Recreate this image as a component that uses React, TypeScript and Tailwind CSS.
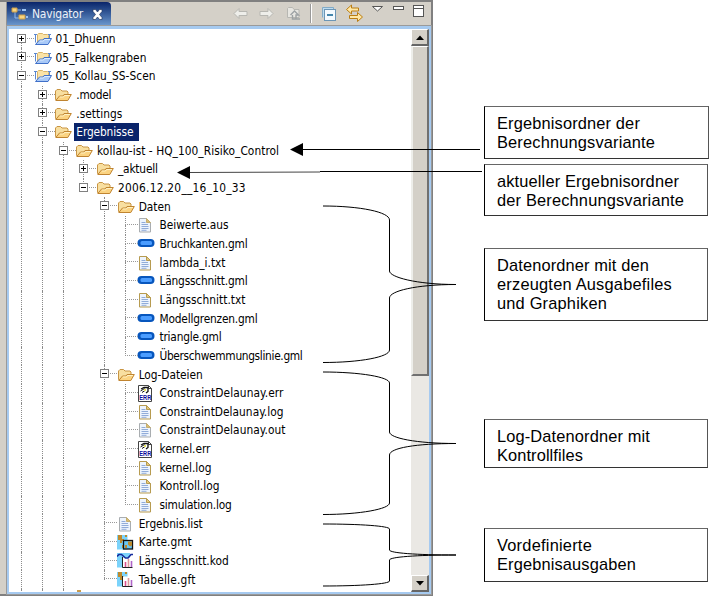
import { useLayoutEffect, useRef, useState } from "react";
import type { ReactNode } from "react";

type Kind = "project" | "folder" | "text" | "pill" | "err" | "map" | "kod" | "gft";
type Node = { level: number; kind: Kind; label: string; width: number; box?: "plus" | "minus"; selected?: boolean; pale?: boolean };

const nodes: Node[] = [
  { level: 0, kind: "project", label: "01_Dhuenn", width: 60, box: "plus" },
  { level: 0, kind: "project", label: "05_Falkengraben", width: 91, box: "plus" },
  { level: 0, kind: "project", label: "05_Kollau_SS-Scen", width: 100, box: "minus" },
  { level: 1, kind: "folder", label: ".model", width: 35, box: "plus" },
  { level: 1, kind: "folder", label: ".settings", width: 46, box: "plus" },
  { level: 1, kind: "folder", label: "Ergebnisse", width: 57, box: "minus", selected: true },
  { level: 2, kind: "folder", label: "kollau-ist - HQ_100_Risiko_Control", width: 182, box: "minus" },
  { level: 3, kind: "folder", label: "_aktuell", width: 40, box: "plus" },
  { level: 3, kind: "folder", label: "2006.12.20__16_10_33", width: 128, box: "minus" },
  { level: 4, kind: "folder", label: "Daten", width: 32, box: "minus" },
  { level: 5, kind: "text", label: "Beiwerte.aus", width: 69, pale: true },
  { level: 5, kind: "pill", label: "Bruchkanten.gml", width: 88 },
  { level: 5, kind: "text", label: "lambda_i.txt", width: 66 },
  { level: 5, kind: "pill", label: "Längsschnitt.gml", width: 88 },
  { level: 5, kind: "text", label: "Längsschnitt.txt", width: 86 },
  { level: 5, kind: "pill", label: "Modellgrenzen.gml", width: 98 },
  { level: 5, kind: "pill", label: "triangle.gml", width: 62 },
  { level: 5, kind: "pill", label: "Überschwemmungslinie.gml", width: 143 },
  { level: 4, kind: "folder", label: "Log-Dateien", width: 64, box: "minus" },
  { level: 5, kind: "err", label: "ConstraintDelaunay.err", width: 124 },
  { level: 5, kind: "text", label: "ConstraintDelaunay.log", width: 124 },
  { level: 5, kind: "text", label: "ConstraintDelaunay.out", width: 126, pale: true },
  { level: 5, kind: "err", label: "kernel.err", width: 51 },
  { level: 5, kind: "text", label: "kernel.log", width: 52 },
  { level: 5, kind: "text", label: "Kontroll.log", width: 60 },
  { level: 5, kind: "text", label: "simulation.log", width: 72 },
  { level: 4, kind: "text", label: "Ergebnis.list", width: 64, pale: true },
  { level: 4, kind: "map", label: "Karte.gmt", width: 53 },
  { level: 4, kind: "kod", label: "Längsschnitt.kod", width: 90 },
  { level: 4, kind: "gft", label: "Tabelle.gft", width: 57 },
];

// The tree goes on below the visible part on the three outer levels.
function continues(row: number, level: number) {
  for (let i = row + 1; i < nodes.length; i++) {
    if (nodes[i].level < level) return false;
    if (nodes[i].level === level) return true;
  }
  return level < 3;
}

// Spreads a line of text over the given width by its letter spacing.
function Fit({ text, width }: { text: string; width: number }) {
  const ref = useRef<HTMLSpanElement>(null);
  const [spacing, setSpacing] = useState(0);
  useLayoutEffect(() => {
    if (ref.current) setSpacing((width - ref.current.getBoundingClientRect().width) / text.length);
  }, [text, width]);
  return (
    <span ref={ref} className="inline-block whitespace-pre" style={{ letterSpacing: `${spacing}px` }}>
      {text}
    </span>
  );
}

function Folder({ project }: { project?: boolean }) {
  if (project) {
    return (
      <svg width="18" height="14" viewBox="0 0 18 14">
        <path d="M0 2.5h3M1.5 2.5v8M14 2.5h3M15.5 2.5v4" stroke="#5b87cf" fill="none" />
        <path d="M3.5 11V2.5L4.5 1.5h4l1 1h4l1 1V7L5 12z" fill="#fbe3a6" stroke="#d9b469" />
        <path d="M1.5 12.5L5.5 8h3.5l1-1.5h7.5L14 12.5z" fill="#a9c9f7" stroke="#3f70c9" strokeLinejoin="round" />
        <path d="M5.8 9h3.7l1-1.5h5.5" stroke="#deedff" fill="none" />
      </svg>
    );
  }
  return (
    <svg width="18" height="14" viewBox="0 0 18 14">
      <path d="M1.5 11.5V3L3 1.5h3.5L8 3h5l1 1v3L3 12z" fill="#f8dfa0" stroke="#c99543" />
      <path d="M1.8 12.5L5.5 8h3.5l1-1.5h7.3L13.8 12.5z" fill="#fbd381" stroke="#c08430" strokeLinejoin="round" />
      <path d="M5.8 9h3.7l1-1.5h5.5" stroke="#fff2c4" fill="none" />
    </svg>
  );
}

function Page({ pale }: { pale?: boolean }) {
  const c = pale ? "#a9adb0" : "#b79b50";
  return (
    <svg width="18" height="16" viewBox="0 0 18 16">
      <path d="M2.5 1.5h7l4 4v9.5h-11z" fill="#edf4fd" stroke={c} />
      <path d="M9.5 1.5v4h4z" fill={pale ? "#d9bd73" : "#e6ca7b"} stroke={pale ? "#c4ad70" : c} />
      <path d="M4.5 5.5h4M4.5 7.500h6.500M4.500 9.500h7M4.500 11.500h7M4.500 13.300h5" stroke="#91acd9" />
    </svg>
  );
}

function Pill() {
  return (
    <svg width="18" height="14" viewBox="0 0 18 14">
      <rect x=".5" y="2" width="17" height="8" rx="4" fill="#0756bd" />
      <rect x="3.5" y="4" width="11.5" height="4" rx="1.5" fill="#4b9dff" />
    </svg>
  );
}

function ErrFile() {
  return (
    <svg width="18" height="17" viewBox="0 0 18 17">
      <path d="M1.5 .5h10l3 3v13h-13z" fill="#fff" stroke="#444" />
      <path d="M11.5 .5v3h3" fill="none" stroke="#444" />
      <path d="M4 4l3-1.500h4v4l-2 1.500" fill="none" stroke="#111" strokeWidth="1.3" />
      <path d="M3.500 6l4-2.500M5 7.500l3-2" fill="none" stroke="#111" />
      <path d="M7 4h2v2H7z" fill="#e7e360" />
      <text x="2.300" y="15.200" fontSize="7.500" fontWeight="700" fill="#0a0a9a" fontFamily="Liberation Sans, sans-serif" textLength="12" lengthAdjust="spacingAndGlyphs">ERR</text>
    </svg>
  );
}

function Chart({ kind }: { kind: "map" | "kod" | "gft" }) {
  return (
    <svg width="18" height="17" viewBox="0 0 18 17">
      <rect x="0" y="1" width={kind === "kod" ? 13 : 10.5} height="14.5" fill="#7bd3fb" />
      {kind !== "kod" && <path d="M1 1h4v4h2v2H5v4h2v3H5V9H3V6H1zM8 1h2v2H8z" fill="#bd8a2e" />}
      {kind === "map" ? (
        <>
          <rect x="6.5" y="6.5" width="9" height="8.5" fill="#68c8f5" stroke="#111" strokeWidth="1.3" />
          <path d="M11 7.5h4v4l-2 1-2-2zM8 11h2v3H8z" fill="#bd8a2e" />
        </>
      ) : (
        <>
          <path d="M5.5 5.5h10.5v10H5.5z" fill="#fff" />
          <path d="M5.5 5v10.5h10" stroke="#222" fill="none" />
          <path d="M8.5 10v5" stroke="#db508e" strokeWidth="1.6" />
          <path d="M11.5 7v8" stroke="#e0989a" strokeWidth="1.6" />
          <path d="M14.5 9v6" stroke="#b065c9" strokeWidth="1.6" />
          {kind === "kod" && <path d="M0 4.5L2 2.5h2.5l4 3.5H11l3-3.5h2" fill="none" stroke="#152c9d" strokeWidth="1.6" />}
        </>
      )}
    </svg>
  );
}

function icon(node: Node): ReactNode {
  if (node.kind === "project") return <Folder project />;
  if (node.kind === "folder") return <Folder />;
  if (node.kind === "pill") return <Pill />;
  if (node.kind === "err") return <ErrFile />;
  if (node.kind === "text") return <Page pale={node.pale} />;
  return <Chart kind={node.kind} />;
}

function Row({ node, index }: { node: Node; index: number }) {
  return (
    <div className="flex h-[18.65px] shrink-0 items-stretch pl-[12px]">
      {Array.from({ length: node.level }, (_, level) => (
        <div key={level} className="w-[20.8px] shrink-0">
          {continues(index, level) && <div className="h-full border-l border-dotted border-[#8c8c8c]" />}
        </div>
      ))}
      <div className="relative w-[12.5px] shrink-0">
        {index > 0 && <div className="absolute top-0 left-0 h-1/2 border-l border-dotted border-[#8c8c8c]" />}
        {continues(index, node.level) && <div className="absolute bottom-0 left-0 h-1/2 border-l border-dotted border-[#8c8c8c]" />}
        <div className="absolute top-[8px] left-0 w-[13px] border-t border-dotted border-[#999]" />
        {node.box && (
          <svg className="absolute top-[4px] left-[-4px]" width="9" height="9" viewBox="0 0 9 9">
            <rect x=".5" y=".5" width="8" height="8" fill="#fff" stroke="#808080" />
            <path d={node.box === "plus" ? "M2 4.5h5M4.5 2v5" : "M2 4.5h5"} stroke="#000" />
          </svg>
        )}
      </div>
      <div className="flex w-[21px] shrink-0 items-center">{icon(node)}</div>
      <div className={node.selected ? "-ml-px flex h-[18px] items-center bg-[#0a246a] pr-[6px] pl-[2px] text-white" : "flex items-center pl-px"}>
        <Fit text={node.label} width={node.width} />
      </div>
    </div>
  );
}

function Toolbar() {
  return (
    <svg width="211" height="24" viewBox="221 2 211 24">
      <path d="M235 13.5l5-5v3h8v4h-8v3z" fill="#eeeeea" stroke="#b7b7b2" />
      <path d="M274 13.5l-5-5v3h-8v4h8v3z" fill="#eeeeea" stroke="#b7b7b2" />
      <path d="M288.5 17.5v-9l1-1h4l1.5 2h5v8z" fill="#e7e6e1" stroke="#b7b7b2" />
      <path d="M291.5 15l4-4 4 4h-2.5v4h4M293.5 15v4h4" fill="none" stroke="#9da2a4" strokeWidth="1.4" />
      <path d="M311.5 4v19" stroke="#999" /><path d="M312.5 4v19" stroke="#fff" />
      <path d="M323.5 17.5v-10h11v3" fill="#bddcf0" stroke="#83abc7" />
      <rect x="325.5" y="9.5" width="11" height="11" fill="#f4faff" stroke="#6c96b6" />
      <path d="M328 15h6" stroke="#25719e" strokeWidth="1.7" />
      <path d="M347.5 9.5l5-4.5v3h7v3h-7v3z" fill="#ffe8a5" stroke="#ba7d12" />
      <path d="M363.5 17l-5-4.5v3h-8v3h8v3z" fill="#ffe8a5" stroke="#ba7d12" />
      <path d="M373.5 6.5h10l-5 4.5z" fill="#fff" stroke="#555" />
      <rect x="394.5" y="6.5" width="10" height="3" fill="#fff" stroke="#555" />
      <rect x="414.5" y="5.5" width="10" height="11" fill="#fff" stroke="#555" /><path d="M414 8.5h11" stroke="#555" />
    </svg>
  );
}

function ScrollButton({ down }: { down?: boolean }) {
  return (
    <div className="flex h-[17px] shrink-0 items-center justify-center border-t border-r-2 border-b-2 border-l border-t-white border-r-[#666] border-b-[#666] border-l-white bg-[#d4d0c8]">
      <svg width="8" height="5" viewBox="0 0 8 5"><path d={down ? "M0 0h8L4 4.5z" : "M0 5h8L4 .5z"} /></svg>
    </div>
  );
}

function Navigator() {
  return (
    <section className="flex h-[596px] w-[433px] shrink-0 border-t-2 border-r-2 border-b-2 border-[#808080] bg-[#d4d0c8]">
      <div className="w-[7px] shrink-0 border-r border-[#929292]" />
      <div className="flex w-[424px] shrink-0 flex-col">
        <header className="flex h-[24px] shrink-0 justify-between">
          <div className="flex h-[24px] w-[104px] items-center rounded-tr-sm bg-linear-to-b from-[#0a246a] to-[#6f9bd0] pl-[4px] text-[12px] text-[#edf1f8]">
            <svg className="mr-[4px]" width="17" height="14" viewBox="0 0 17 14">
              <path d="M4 3v8h7M6 3h4" fill="none" stroke="#91b8eb" />
              <path d="M1 1h5v4H1zM8 8h6v4H8z" fill="#f8d57f" stroke="#c99b4b" />
              <path d="M11 3h4M15 10h2" stroke="#9bc2f3" strokeWidth="2" />
            </svg>
            <Fit text="Navigator" width={51} />
            <svg className="ml-[9px]" width="11" height="11" viewBox="0 0 11 11">
              <path d="M1 .5h2.5l2 2.5 2-2.5H10v2L7.5 5.5 10 8.5v2H7.5l-2-2.5-2 2.5H1v-2l2.5-3L1 2.5z" fill="#fff" stroke="#273a61" strokeWidth=".7" />
            </svg>
          </div>
          <Toolbar />
        </header>
        <div className="flex h-[568px] flex-col border-t-[3px] border-r-2 border-b-2 border-l-2 border-[#a6caf0] outline-1 -outline-offset-0 outline-[#9a9a9a]">
          <div className="flex min-h-0 flex-1 bg-white">
            <div className="flex w-[402px] shrink-0 flex-col overflow-hidden pt-[0.7px]">
              {nodes.map((node, i) => <Row key={i} node={node} index={i} />)}
              <div className="flex h-[4px] shrink-0 pl-[12px]">
                {[0, 1, 2].map((n) => <div key={n} className="h-full w-[20.8px] border-l border-dotted border-[#8c8c8c]" />)}
                <div className="mt-px ml-[-6px] h-[2px] w-[4px] bg-[#c99b4c]" />
              </div>
            </div>
            <div className="flex w-[18px] flex-col bg-[#eae8e4]">
              <ScrollButton />
              <div className="h-[330px] shrink-0 border-t border-r-2 border-b-2 border-l-2 border-t-white border-r-[#707070] border-b-[#707070] border-l-[#eeeeea] bg-[#d4d0c8]" />
              <div className="flex-1" />
              <ScrollButton down />
            </div>
          </div>
        </div>
      </div>
    </section>
  );
}

function Callout({ className, lines }: { className: string; lines: [string, number][] }) {
  return (
    <div className={`flex flex-col border border-t-[#666] border-r-[#555] border-b-[#333] border-l-black bg-white pt-[7px] pl-[12px] font-['Liberation_Sans',Arial,sans-serif] text-[16.4px] leading-[19px] text-black ${className}`}>
      {lines.map(([text, width]) => <div key={text} className="h-[19px]"><Fit text={text} width={width} /></div>)}
    </div>
  );
}

export default function App() {
  return (
    <main className="relative flex h-[597px] w-[712px] overflow-hidden bg-white font-['DejaVu_Sans_Condensed','DejaVu_Sans',sans-serif] text-[11.8px] leading-[16px] text-black [font-stretch:condensed]">
      <Navigator />
      <aside className="flex flex-col pl-[51px]">
        <Callout className="mt-[106px] h-[53px] w-[225px]" lines={[["Ergebnisordner der", 143], ["Berechnungsvariante", 158]]} />
        <Callout className="mt-[5px] h-[52px] w-[224px]" lines={[["aktueller Ergebnisordner", 182], ["der Berechnungsvariante", 187]]} />
        <Callout className="mt-[32px] h-[73px] w-[224px]" lines={[["Datenordner mit den", 152], ["erzeugten Ausgabefiles", 175], ["und Graphiken", 110]]} />
        <Callout className="mt-[98px] h-[49px] w-[224px]" lines={[["Log-Datenordner mit", 153], ["Kontrollfiles", 86]]} />
        <Callout className="mt-[60px] h-[54px] w-[224px]" lines={[["Vordefinierte", 95], ["Ergebnisausgaben", 139]]} />
      </aside>
      <svg className="pointer-events-none absolute inset-0" width="712" height="597" viewBox="0 0 712 597" fill="none" stroke="#000">
        <path d="M302 149.5h178" />
        <path d="M188 172.5L320 172" stroke="#444" /><path d="M320 171.5h162" />
        <path d="M290 149.5l13-6.5v13zM177 172.5l13-6.5v13z" fill="#000" stroke="none" />
        <path d="M323 206C360 206 389.5 212 389.5 220V271C389.5 277 416 284.5 456 284.5C416 284.5 389.5 291 389.5 298V350C389.5 357 360 362.5 323 362.5" />
        <path d="M323 372C360 372 389.5 377 389.5 383V432C389.5 438 416 443.5 456 443.5C416 443.5 389.5 448 389.5 455V503C389.5 509 360 514.5 323 514.5" />
        <path d="M323 524C360 524 389.5 526 389.5 529V550C389.5 553 416 555 456 555C416 555 389.5 557 389.5 560V581C389.5 584 360 586 323 586" />
      </svg>
    </main>
  );
}
